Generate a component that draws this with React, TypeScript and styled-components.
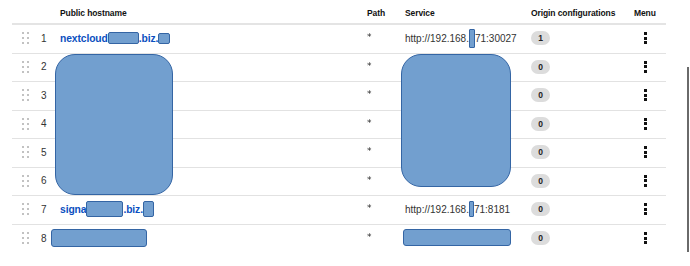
import * as React from "react";
import styled, { createGlobalStyle } from "styled-components";

const GlobalStyle = createGlobalStyle`
  html, body {
    margin: 0;
    padding: 0;
    background: #ffffff;
  }
  body {
    font-family: "Liberation Sans", Arial, sans-serif;
    color: #222;
  }
`;

const COLS = "25px 19px 307px 38px 126px 103px 36px";

const Page = styled.div`
  position: relative;
  width: 690px;
  height: 266px;
  overflow: hidden;
`;

const Table = styled.div`
  position: relative;
  margin-left: 12px;
  width: 654px;
`;

const HeaderRow = styled.div`
  display: grid;
  grid-template-columns: ${COLS};
  height: 25px;
  align-items: end;
  padding-bottom: 5px;
  box-sizing: border-box;
  border-bottom: 2px solid #e4e4e4;
  font-size: 8.5px;
  font-weight: 700;
  color: #111;
`;

const HeadCell = styled.div`
  padding-left: 4px;
  white-space: nowrap;
  letter-spacing: -0.1px;
`;

const Row = styled.div<{ $last?: boolean }>`
  display: grid;
  grid-template-columns: ${COLS};
  height: 28.5px;
  align-items: center;
  box-sizing: border-box;
  padding-bottom: 1px;
  border-bottom: ${(p) => (p.$last ? "none" : "1.5px solid #e2e2e2")};
  font-size: 10px;
`;

const Cell = styled.div`
  padding-left: 4px;
  white-space: nowrap;
  display: flex;
  align-items: center;
`;

const HandleCell = styled.div`
  padding-left: 10px;
  display: flex;
  align-items: center;
`;

const Handle = styled.div`
  display: grid;
  grid-template-columns: 2px 2px;
  grid-template-rows: 2px 2px 2px;
  column-gap: 3px;
  row-gap: 3px;
  span {
    background: #c2c2c2;
  }
`;

const Num = styled.span`
  color: #333;
  font-size: 10px;
`;

const Host = styled.a`
  color: #0b4fc0;
  font-weight: 700;
  font-size: 10.3px;
  letter-spacing: -0.1px;
  text-decoration: none;
  display: inline-flex;
  align-items: center;
`;

const Star = styled.span`
  display: inline-block;
  color: #2a2a2a;
  font-family: "DejaVu Sans", sans-serif;
  font-size: 9px;
  margin-top: -2px;
  will-change: transform;
`;

const ServiceText = styled.span`
  color: #333;
  font-size: 10px;
  display: inline-flex;
  align-items: center;
`;

const Badge = styled.span`
  display: inline-flex;
  align-items: center;
  justify-content: center;
  width: 19px;
  height: 14px;
  border-radius: 7px;
  background: #dcdcdc;
  font-size: 8.5px;
  font-weight: 700;
  color: #222;
`;

const Kebab = styled.div`
  padding-left: 14px;
  display: flex;
  flex-direction: column;
  gap: 1.5px;
  span {
    width: 3px;
    height: 3px;
    background: #111;
  }
`;

const Redact = styled.span<{ $w: number; $h: number; $r?: number }>`
  display: inline-block;
  width: ${(p) => p.$w}px;
  height: ${(p) => p.$h}px;
  background: #729fcf;
  border: 1px solid #3465a4;
  border-radius: ${(p) => p.$r ?? 2}px;
  box-sizing: border-box;
`;

const Blob = styled.div<{ $r: number }>`
  position: absolute;
  background: #729fcf;
  border: 1px solid #3465a4;
  border-radius: ${(p) => p.$r}px;
  box-sizing: border-box;
`;

const ScrollEdge = styled.div`
  position: absolute;
  left: 687px;
  top: 67px;
  width: 2px;
  height: 185px;
  background: #6a6a6a;
`;

type RowData = {
  n: number;
  host?: React.ReactNode;
  service?: React.ReactNode;
  count: number;
};

const rows: RowData[] = [
  {
    n: 1,
    host: (
      <>
        nextcloud
        <Redact $w={31} $h={12} />
        .biz.
        <Redact $w={12} $h={11} />
      </>
    ),
    service: (
      <>
        http://192.168.
        <Redact $w={6} $h={19} $r={1} />
        71:30027
      </>
    ),
    count: 1,
  },
  { n: 2, count: 0 },
  { n: 3, count: 0 },
  { n: 4, count: 0 },
  { n: 5, count: 0 },
  { n: 6, count: 0 },
  {
    n: 7,
    host: (
      <>
        signa
        <Redact $w={37} $h={16} />
        .biz.
        <Redact $w={11} $h={16} />
      </>
    ),
    service: (
      <>
        http://192.168.
        <Redact $w={5} $h={16} $r={1} />
        71:8181
      </>
    ),
    count: 0,
  },
  { n: 8, count: 0 },
];

function DragHandle() {
  return (
    <Handle>
      {Array.from({ length: 6 }).map((_, i) => (
        <span key={i} />
      ))}
    </Handle>
  );
}

export default function App() {
  return (
    <Page>
      <GlobalStyle />
      <Table>
        <HeaderRow>
          <HeadCell />
          <HeadCell />
          <HeadCell>Public hostname</HeadCell>
          <HeadCell>Path</HeadCell>
          <HeadCell>Service</HeadCell>
          <HeadCell>Origin configurations</HeadCell>
          <HeadCell>Menu</HeadCell>
        </HeaderRow>
        {rows.map((r, i) => (
          <Row key={r.n} $last={i === rows.length - 1}>
            <HandleCell>
              <DragHandle />
            </HandleCell>
            <Cell>
              <Num>{r.n}</Num>
            </Cell>
            <Cell>{r.host && <Host href="#">{r.host}</Host>}</Cell>
            <Cell>
              <Star>*</Star>
            </Cell>
            <Cell>{r.service && <ServiceText>{r.service}</ServiceText>}</Cell>
            <Cell>
              <Badge>{r.count}</Badge>
            </Cell>
            <Kebab>
              <span />
              <span />
              <span />
            </Kebab>
          </Row>
        ))}
        {/* redaction overlays */}
        <Blob $r={20} style={{ left: 43, top: 54, width: 118, height: 141 }} />
        <Blob $r={20} style={{ left: 389, top: 54, width: 110, height: 133 }} />
        <Blob $r={3} style={{ left: 39, top: 229, width: 96, height: 18 }} />
        <Blob $r={3} style={{ left: 391, top: 229, width: 108, height: 17 }} />
      </Table>
      <ScrollEdge />
    </Page>
  );
}
